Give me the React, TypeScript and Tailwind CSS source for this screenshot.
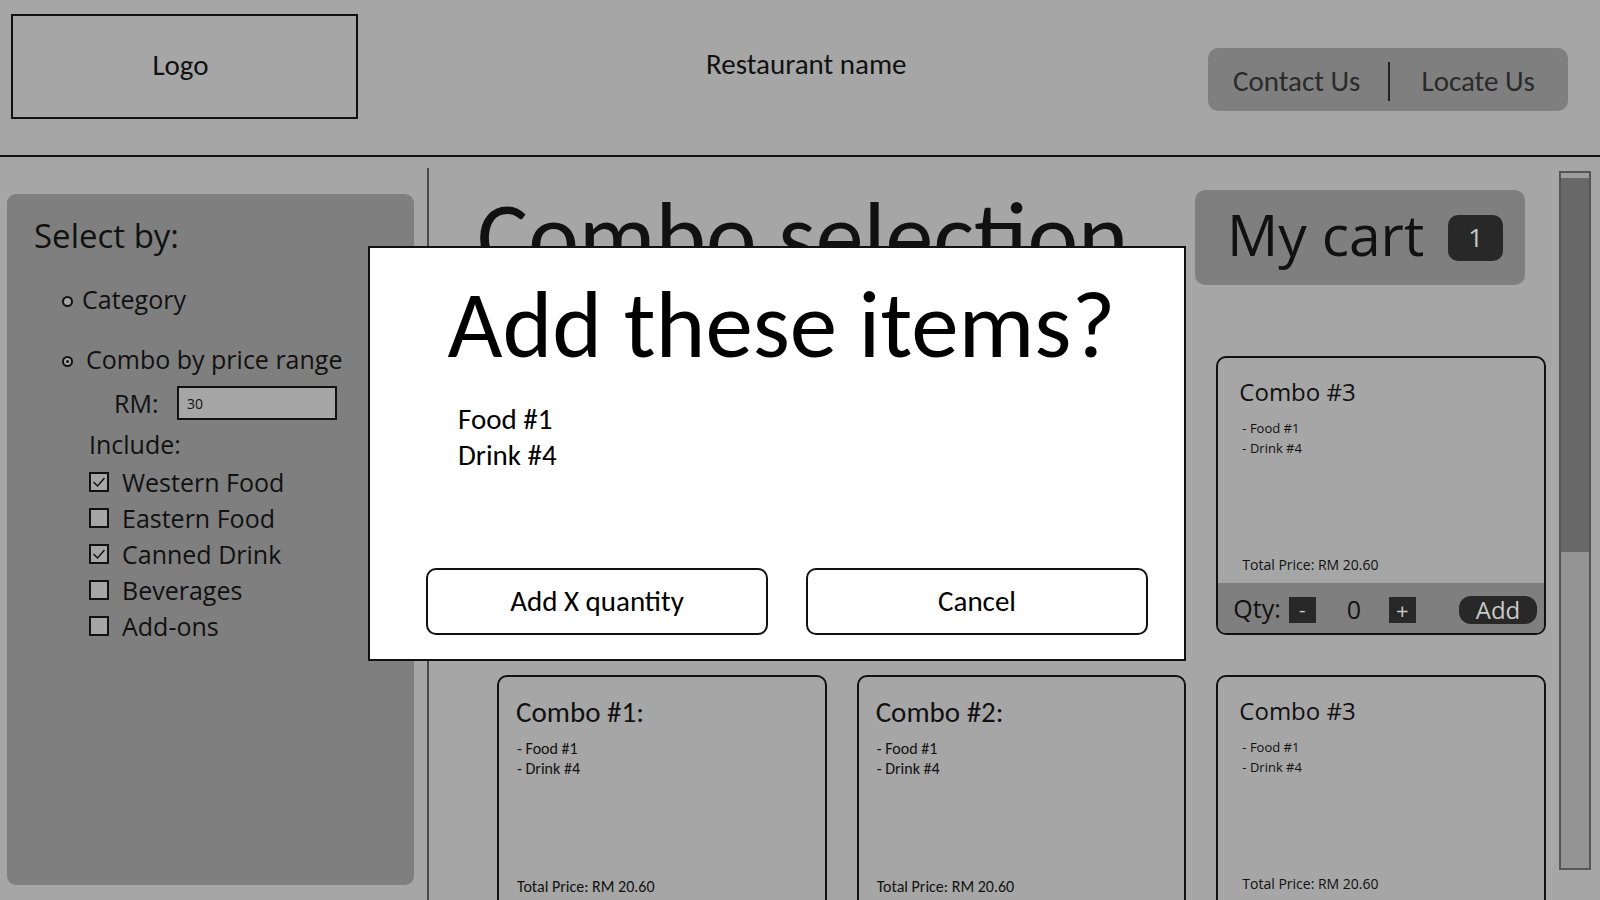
const CAL = { fontFamily: '"Carlito", "Liberation Sans", sans-serif' };
const OS = { fontFamily: '"Open Sans", "Noto Sans", sans-serif' };

function Radio({ checked }: { checked?: boolean }) {
  return (
    <span className="mt-[4px] w-[11px] h-[11px] rounded-full border-2 border-[#111] bg-[#a6a6a6] flex items-center justify-center shrink-0">
      {checked && <span className="w-[3px] h-[3px] rounded-full bg-[#111]" />}
    </span>
  );
}

function Check({ checked, label }: { checked?: boolean; label: string }) {
  return (
    <div className="ml-[82px] h-[36px] flex items-center">
      <span className="w-[20px] h-[20px] border-2 border-[#111] bg-[#a6a6a6] shrink-0 flex items-center justify-center">
        {checked && (
          <svg width="16" height="16" viewBox="0 0 16 16">
            <polyline points="2.5,8 6.5,12 13.5,4" fill="none" stroke="#111" strokeWidth="1.4" />
          </svg>
        )}
      </span>
      <span className="ml-[13px] text-[25px] leading-[36px] text-[#111]">{label}</span>
    </div>
  );
}

function Card({ title, os }: { title: string; os?: boolean }) {
  return (
    <div className="h-[279px] border-2 border-[#111] rounded-[10px] flex flex-col overflow-hidden text-[#111]">
      {os ? (
        <div className="pl-[21px] pt-[18px]" style={OS}>
          <div className="text-[24px] leading-[32px]">{title}</div>
          <div className="mt-[10px] text-[13px] leading-[20px] pl-[3px]">
            <div>- Food #1</div>
            <div>- Drink #4</div>
          </div>
        </div>
      ) : (
        <div className="pl-[17px] pt-[19px]" style={CAL}>
          <div className="text-[29px] leading-[32px]">{title}</div>
          <div className="mt-[11px] text-[16px] leading-[20px] pl-[1px]">
            <div>- Food #1</div>
            <div>- Drink #4</div>
          </div>
        </div>
      )}
      {os ? (
        <div className="mt-auto mb-[8px] pl-[24px] text-[14px] leading-[20px]" style={OS}>
          Total Price: RM 20.60
        </div>
      ) : (
        <div className="mt-auto mb-[5px] pl-[18px] text-[16px] leading-[20px]" style={CAL}>
          Total Price: RM 20.60
        </div>
      )}
      <div className="h-[50px] shrink-0 bg-[#7f7f7f] flex items-center pl-[15px] pr-[7px]" style={OS}>
        <span className="text-[25px] leading-[30px] text-[#111]">Qty:</span>
        <span className="ml-[8px] w-[27px] h-[26px] bg-[#282828] text-[#c8c8c8] text-[20px] leading-[26px] flex items-center justify-center mt-[3px]">
          -
        </span>
        <span className="w-[73px] pl-[3px] text-center text-[25px] leading-[30px] mt-[2px]">0</span>
        <span className="w-[27px] h-[26px] bg-[#282828] text-[#c8c8c8] text-[22px] leading-[26px] flex items-center justify-center mt-[3px]">
          +
        </span>
        <span className="ml-auto w-[78px] h-[28px] rounded-[12px] bg-[#282828] text-[#c8c8c8] text-[24px] leading-[28px] flex items-center justify-center mt-[3px]">
          Add
        </span>
      </div>
    </div>
  );
}

export default function App() {
  return (
    <div className="relative w-[1600px] h-[900px] overflow-hidden bg-[#a6a6a6] text-[#111]">
      {/* Header */}
      <header className="h-[157px] border-b-2 border-[#111] flex items-start" style={CAL}>
        <div className="ml-[11px] mt-[14px] w-[347px] h-[105px] border-2 border-[#111] flex items-center justify-center text-[29px] leading-[36px] pr-[8px] pb-[4px]">
          Logo
        </div>
        <div className="ml-[348px] mt-[46px] text-[29px] leading-[36px]">Restaurant name</div>
        <div className="ml-auto mr-[32px] mt-[48px] h-[63px] w-[360px] rounded-[10px] bg-[#7f7f7f] flex items-center text-[#2a2a2a] text-[29px] leading-[36px] pl-[25px] pt-[3px]">
          <span>Contact Us</span>
          <span className="ml-[28px] w-[2px] h-[39px] bg-[#222]" />
          <span className="ml-[31px]">Locate Us</span>
        </div>
      </header>

      {/* Body */}
      <div className="flex items-start">
        {/* Sidebar */}
        <div className="pl-[7px] pt-[37px] w-[414px] shrink-0">
          <div className="w-[407px] h-[691px] rounded-[9px] bg-[#7f7f7f] pt-[25px]" style={OS}>
            <div className="ml-[27px] text-[33px] leading-[33px]">Select by:</div>
            <div className="ml-[55px] mt-[29px] h-[36px] flex items-center">
              <Radio />
              <span className="ml-[9px] text-[25px] leading-[36px]">Category</span>
            </div>
            <div className="ml-[55px] mt-[24px] h-[36px] flex items-center">
              <Radio checked />
              <span className="ml-[13px] text-[25px] leading-[36px]">Combo by price range</span>
            </div>
            <div className="ml-[105px] mt-[8px] h-[36px] flex items-center">
              <span className="w-[65px] text-[25px] leading-[36px] pl-[2px]">RM:</span>
              <div className="w-[160px] h-[34px] border-2 border-[#111] bg-[#a6a6a6] flex items-center pl-[8px] text-[14px]">
                30
              </div>
            </div>
            <div className="ml-[82px] mt-[5px] text-[25px] leading-[36px]">Include:</div>
            <div className="mt-[2px]">
              <Check checked label="Western Food" />
              <Check label="Eastern Food" />
              <Check checked label="Canned Drink" />
              <Check label="Beverages" />
              <Check label="Add-ons" />
            </div>
          </div>
        </div>

        {/* Divider */}
        <div className="ml-[13px] mt-[11px] w-[2px] h-[740px] bg-[#4a4a4a] shrink-0" />

        {/* Main */}
        <main className="flex-1 pt-[25px]">
          <div className="flex items-start justify-between pl-[48px] pr-[34px]">
            <h1 className="mt-[7px] text-[96px] leading-[95px] text-[#111]" style={CAL}>
              Combo selection
            </h1>
            <div className="mt-[8px] w-[330px] h-[95px] rounded-[10px] bg-[#7f7f7f] flex items-center pl-[32px]" style={OS}>
              <span className="text-[57px] leading-[57px] mb-[6px]">My cart</span>
              <span className="ml-[24px] w-[55px] h-[46px] rounded-[10px] bg-[#282828] text-[#c8c8c8] text-[26px] flex items-center justify-center">
                1
              </span>
            </div>
          </div>

          <div className="ml-[68px] mt-[71px] w-[1049px] grid grid-cols-3 gap-x-[30px] gap-y-[40px]">
            <Card title="Combo #1:" />
            <Card title="Combo #2:" />
            <Card title="Combo #3" os />
            <Card title="Combo #1:" />
            <Card title="Combo #2:" />
            <Card title="Combo #3" os />
          </div>
        </main>

        {/* Scrollbar */}
        <div className="mt-[14px] mr-[9px] w-[32px] h-[699px] border-2 border-[#555] bg-[#949494] shrink-0 flex flex-col">
          <div className="h-[5px] bg-[#9e9e9e]" />
          <div className="h-[374px] bg-[#686868]" />
        </div>
      </div>

      {/* Modal */}
      <div className="absolute left-[368px] top-[246px] w-[818px] h-[415px] bg-white border-2 border-[#111] flex flex-col" style={CAL}>
        <div className="pt-[30px] pl-[9px] text-center text-[95px] leading-[95px] text-black">Add these items?</div>
        <div className="mt-[28px] pl-[88px] text-[29px] leading-[36px] text-black">
          <div>Food #1</div>
          <div>Drink #4</div>
        </div>
        <div className="mt-auto mb-[24px] pl-[56px] flex gap-[38px]">
          <button className="w-[342px] h-[67px] rounded-[10px] border-2 border-[#111] bg-white text-[29px] text-black">
            Add X quantity
          </button>
          <button className="w-[342px] h-[67px] rounded-[10px] border-2 border-[#111] bg-white text-[29px] text-black">
            Cancel
          </button>
        </div>
      </div>
    </div>
  );
}
